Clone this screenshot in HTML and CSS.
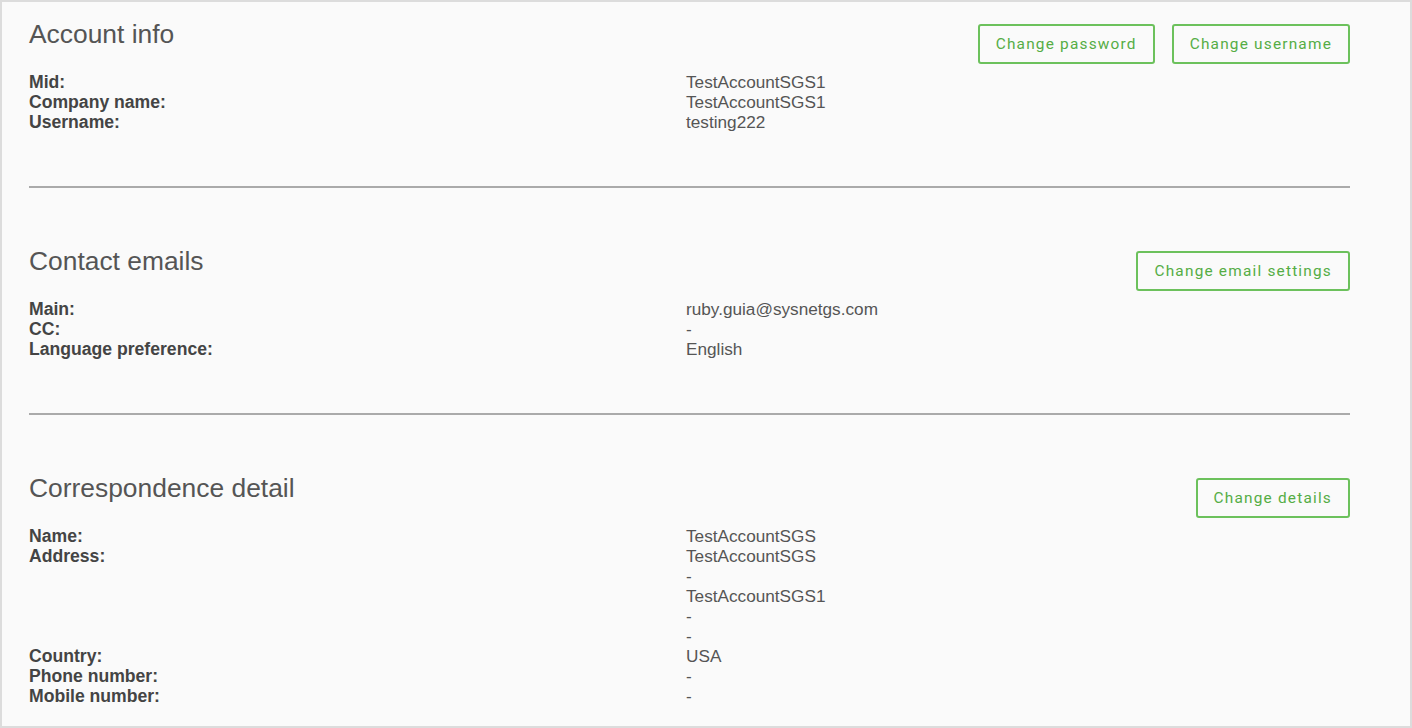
FILE: index.html
```html
<!DOCTYPE html>
<html lang="en">
<head>
<meta charset="utf-8">
<title>Account</title>
<link rel="stylesheet" href="styles.css">
</head>
<body>
<div class="frame">
  <section class="section">
    <div class="head">
      <h2 class="title">Account info</h2>
      <div class="actions">
        <button class="btn">Change password</button>
        <button class="btn">Change username</button>
      </div>
    </div>
    <dl class="rows">
      <dt>Mid:</dt><dd>TestAccountSGS1</dd>
      <dt>Company name:</dt><dd>TestAccountSGS1</dd>
      <dt>Username:</dt><dd>testing222</dd>
    </dl>
  </section>
  <hr class="sep">
  <section class="section">
    <div class="head">
      <h2 class="title">Contact emails</h2>
      <div class="actions">
        <button class="btn">Change email settings</button>
      </div>
    </div>
    <dl class="rows">
      <dt>Main:</dt><dd>ruby.guia@sysnetgs.com</dd>
      <dt>CC:</dt><dd>-</dd>
      <dt>Language preference:</dt><dd>English</dd>
    </dl>
  </section>
  <hr class="sep">
  <section class="section">
    <div class="head">
      <h2 class="title">Correspondence detail</h2>
      <div class="actions">
        <button class="btn">Change details</button>
      </div>
    </div>
    <dl class="rows">
      <dt>Name:</dt><dd>TestAccountSGS</dd>
      <dt>Address:</dt><dd>TestAccountSGS<br>-<br>TestAccountSGS1<br>-<br>-</dd>
      <dt>Country:</dt><dd>USA</dd>
      <dt>Phone number:</dt><dd>-</dd>
      <dt>Mobile number:</dt><dd>-</dd>
    </dl>
  </section>
</div>
</body>
</html>
```
FILE: styles.css
```css
html, body {
  margin: 0;
  padding: 0;
  background: #fafafa;
}
body {
  font-family: "Liberation Sans", Arial, sans-serif;
}
.frame {
  box-sizing: border-box;
  width: 1412px;
  height: 728px;
  border: 2px solid #dcdcdc;
  background: #fafafa;
  padding: 17px 60px 0 27px;
  overflow: hidden;
}
.head {
  display: flex;
  justify-content: space-between;
  align-items: flex-start;
}
.title {
  margin: 0;
  font-weight: normal;
  font-size: 26.4px;
  line-height: 30px;
  color: #555;
}
.actions {
  display: flex;
  gap: 17px;
  margin-top: 5px;
}
.btn {
  box-sizing: border-box;
  height: 40px;
  padding: 0 16px;
  border: 2px solid #6cc15c;
  border-radius: 3px;
  background: #fafafa;
  color: #55ad45;
  font-family: Roboto, "Liberation Sans", sans-serif;
  font-size: 15.4px;
  letter-spacing: 1.2px;
  cursor: pointer;
}
.rows {
  display: grid;
  grid-template-columns: 657px 1fr;
  margin: 8px 0 0 0;
  line-height: 20px;
}
.rows dt {
  font-weight: bold;
  font-size: 17.6px;
  color: #444;
}
.rows dd {
  margin: 0;
  font-size: 17.2px;
  color: #555;
}
.sep {
  margin: 54px 0 58px 0;
  border: 0;
  height: 2px;
  background: #aaa;
}
```
